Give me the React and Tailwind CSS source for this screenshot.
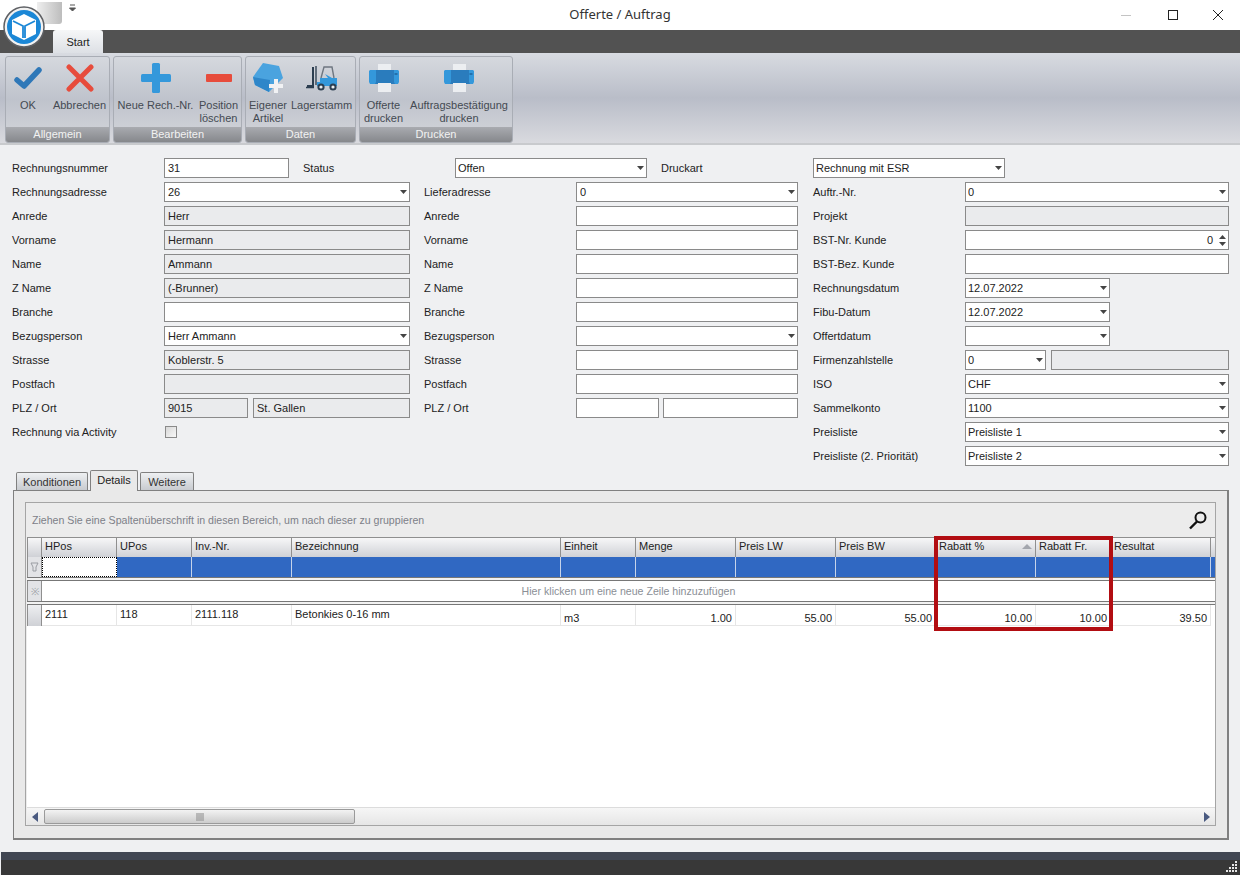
const COLS = [
  { name: 'HPos', w: 75 },
  { name: 'UPos', w: 75 },
  { name: 'Inv.-Nr.', w: 100 },
  { name: 'Bezeichnung', w: 269 },
  { name: 'Einheit', w: 75 },
  { name: 'Menge', w: 100 },
  { name: 'Preis LW', w: 100 },
  { name: 'Preis BW', w: 100 },
  { name: 'Rabatt %', w: 100, sort: true },
  { name: 'Rabatt Fr.', w: 75 },
  { name: 'Resultat', w: 100 },
];

const DATA = ['2111', '118', '2111.118', 'Betonkies 0-16 mm', 'm3', '1.00', '55.00', '55.00', '10.00', '10.00', '39.50'];

function Arrow() {
  return (
    <svg width="7" height="4" viewBox="0 0 7 4" className="shrink-0">
      <path d="M0 0H7L3.5 4Z" fill="#444" />
    </svg>
  );
}

function Field({ w = 'flex-1', value, gray, select, right, spin, tight }) {
  return (
    <div className={`${w} h-5 border border-[#8a8a8a] flex items-center ${tight ? 'pl-[2px]' : 'pl-[3px]'} pr-[1px] text-[11px] text-[#222] ${gray ? 'bg-[#eaebed]' : 'bg-white'}`}>
      <span className={`flex-1 whitespace-nowrap overflow-hidden ${right ? 'text-right pr-[6px]' : ''}`}>{value}</span>
      {select && <span className="mr-[1px] flex"><Arrow /></span>}
      {spin && (
        <span className="flex flex-col gap-[3px] mr-[1px]">
          <span className="rotate-180 flex"><Arrow /></span>
          <Arrow />
        </span>
      )}
    </div>
  );
}

function Row({ label, children }) {
  return (
    <div className="flex items-center h-5 mb-1">
      <span className="w-[152px] shrink-0 text-[#222] whitespace-nowrap">{label}</span>
      {children}
    </div>
  );
}

function CheckIcon() {
  return (
    <svg width="28" height="22" viewBox="0 0 28 22">
      <path d="M3 13L10 19L25 3" fill="none" stroke="#2f78b8" strokeWidth="5.5" strokeLinecap="round" strokeLinejoin="round" />
    </svg>
  );
}

function CrossIcon() {
  return (
    <svg width="28" height="28" viewBox="0 0 28 28">
      <path d="M3 3L25 25M25 3L3 25" fill="none" stroke="#e74c3c" strokeWidth="5" strokeLinecap="round" />
    </svg>
  );
}

function PlusIcon() {
  return (
    <svg width="30" height="30" viewBox="0 0 30 30">
      <rect x="11" y="0" width="8" height="30" rx="1.5" fill="#3498db" />
      <rect x="0" y="11" width="30" height="8" rx="1.5" fill="#3498db" />
    </svg>
  );
}

function MinusIcon() {
  return (
    <svg width="26" height="8" viewBox="0 0 26 8">
      <rect x="0" y="0" width="26" height="8" rx="1" fill="#e74c3c" />
    </svg>
  );
}

function CubePlusIcon() {
  return (
    <svg width="31" height="30" viewBox="0 0 31 30">
      <path d="M10 0L26 3L30 15L16 29L2 22L0 14Z" fill="#4aa3df" />
      <path d="M0 14L17 17L16 29L2 22Z" fill="#2e86c9" />
      <path d="M21 16h4v5h5v4h-5v5h-4v-5h-5v-4h5z" fill="#f1f2f4" />
    </svg>
  );
}

function ForkliftIcon() {
  return (
    <svg width="32" height="26" viewBox="0 0 32 26">
      <path d="M7 2V21H1" fill="none" stroke="#2c3e50" strokeWidth="2" />
      <path d="M0 22.5H8" stroke="#2c3e50" strokeWidth="1.5" />
      <path d="M10 1V20" stroke="#3d4d5c" strokeWidth="1.5" />
      <path d="M15 13L18 2H26L28 13" fill="none" stroke="#6e7680" strokeWidth="1.4" />
      <path d="M19 9L22 13H14V17H11V21H31V13H26" fill="#3498db" />
      <circle cx="15" cy="22" r="3.6" fill="#2c3e50" />
      <circle cx="15" cy="22" r="1.6" fill="#ecf0f1" />
      <circle cx="27" cy="22" r="3.6" fill="#2c3e50" />
      <circle cx="27" cy="22" r="1.6" fill="#ecf0f1" />
    </svg>
  );
}

function PrinterIcon() {
  return (
    <svg width="30" height="28" viewBox="0 0 30 28">
      <rect x="9" y="0" width="13" height="7" fill="#eceef1" />
      <path d="M1 6H29L30 7V18L29 20H1L0 18V7Z" fill="#3498db" />
      <path d="M7 6H25V18L26 20H6L7 18Z" fill="#2a7cbd" />
      <rect x="25.5" y="9" width="3" height="2" fill="#2470ac" />
      <rect x="9" y="19" width="13" height="9" fill="#eceef1" />
    </svg>
  );
}

function RibbonBtn({ w, icon, lines }) {
  return (
    <div className={`${w} shrink-0 flex flex-col items-center`}>
      <div className="h-[40px] flex items-center justify-center">{icon}</div>
      <div className="mt-[1px] text-[11px] leading-[13px] text-[#444a52] text-center whitespace-nowrap">
        {lines.map((l) => (
          <div key={l}>{l}</div>
        ))}
      </div>
    </div>
  );
}

function RibbonGroup({ w, title, children }) {
  return (
    <div className={`${w} h-[87px] shrink-0 flex flex-col rounded-[3px] border border-[#a9adb5] overflow-hidden bg-gradient-to-b from-[#d5d8de] via-[#bfc3cc] to-[#d4d6db]`}>
      <div className="flex-1 flex pt-[1px]">{children}</div>
      <div className="h-[15px] text-[11px] leading-[15px] text-center text-[#f2f2f2] bg-gradient-to-b from-[#a9abb0] to-[#86888c]">{title}</div>
    </div>
  );
}

function Tab({ label, w, active }) {
  if (active) {
    return <div className={`${w} h-[21px] text-center border border-b-0 border-[#808080] rounded-t-[2px] bg-[#e9e9e9] leading-[19px] text-[#222] -mb-[1px] relative`}>{label}</div>;
  }
  return <div className={`${w} h-[18px] text-center border border-b-0 border-[#808080] rounded-t-[2px] bg-gradient-to-b from-[#eef0f2] to-[#c8cbd0] leading-[18px] text-[#333]`}>{label}</div>;
}

function GridTable() {
  return (
    <div className="text-[#222]">
      <div className="flex h-5 border-t border-[#8f8f8f] bg-gradient-to-b from-[#f7f7f8] to-[#cfd1d6]">
        <div className="w-[15px] shrink-0 border-l border-r border-[#8f8f8f]" />
        {COLS.map((c) => (
          <div key={c.name} style={{ width: c.w }} className="relative shrink-0 border-r border-[#8f8f8f] pl-[3px] leading-[17px]">
            {c.name}
            {c.sort && (
              <svg width="10" height="5" viewBox="0 0 10 5" className="absolute right-[3px] top-[6px]">
                <path d="M0 5L5 0L10 5Z" fill="#a3a6ad" />
              </svg>
            )}
          </div>
        ))}
      </div>
      <div className="flex h-[21px] border-b border-[#777] bg-[#3068c2]">
        <div className="w-[15px] shrink-0 border-l border-r border-[#8f8f8f] flex items-center justify-center bg-[#e2e3e6]">
          <svg width="9" height="10" viewBox="0 0 9 10">
            <path d="M1 1H8L6 5V9H3V5Z" fill="none" stroke="#9a9da3" />
          </svg>
        </div>
        {COLS.map((c, i) => (
          <div key={c.name} style={{ width: c.w }} className={`shrink-0 ${i === 0 ? 'bg-white border border-dotted border-black' : 'border-r border-[#c5d3ea]'}`} />
        ))}
      </div>
      <div className="h-[2px] bg-[#f2f2f2]" />
      <div className="flex h-[22px] border-t border-b border-[#777]">
        <div className="w-[15px] shrink-0 border-l border-r border-[#8f8f8f] flex items-center justify-center bg-[#e2e3e6] text-[10px] text-[#a0a3a9]">※</div>
        <div className="flex-1 bg-white text-center text-[10.6px] leading-[21px] text-[#8b8f96]">Hier klicken um eine neue Zeile hinzuzufügen</div>
      </div>
      <div className="h-[2px] bg-[#f2f2f2]" />
      <div className="flex h-[22px] border-t border-[#777]">
        <div className="w-[15px] shrink-0 border-l border-r border-[#8f8f8f] bg-gradient-to-b from-[#eeeff1] to-[#cfd1d6]" />
        {COLS.map((c, i) => (
          <div
            key={c.name}
            style={{ width: c.w }}
            className={`shrink-0 border-r border-b border-[#e6e6e6] px-[3px] ${i > 4 ? 'text-right' : ''} ${i > 3 ? 'pt-[5px]' : 'pt-[1px]'}`}
          >
            {DATA[i]}
          </div>
        ))}
      </div>
    </div>
  );
}

export default function App() {
  return (
    <div className="relative w-[1240px] h-[875px] overflow-hidden flex flex-col bg-[#eff0f2] font-['Liberation_Sans',sans-serif] text-[11px]">
      {/* title bar */}
      <div className="h-[30px] shrink-0 bg-white flex items-center relative">
        <div className="w-[25px] h-[22px] ml-[37px] -mt-[4px] bg-gradient-to-r from-[#eeeeee] to-[#bdbdbd] rounded-br-[3px]" />
        <svg width="7" height="8" viewBox="0 0 7 8" className="ml-[7px] -mt-[14px]">
          <path d="M1 1H6M0.5 4H6.5L3.5 7Z" stroke="#555" fill="#555" strokeWidth="1" />
        </svg>
        <div className="flex-1 text-center font-['Noto_Sans',sans-serif] text-[13px] text-[#333] -ml-[76px]">Offerte / Auftrag</div>
        <div className="absolute right-0 top-0 h-[30px] flex items-center">
          <svg width="12" height="12" viewBox="0 0 12 12" className="mr-[35px]"><path d="M1 6.5H11" stroke="#c4c4c4" /></svg>
          <svg width="12" height="12" viewBox="0 0 12 12" className="mr-[33px]"><rect x="1.5" y="1.5" width="9" height="9" fill="none" stroke="#222" /></svg>
          <svg width="12" height="12" viewBox="0 0 12 12" className="mr-[16px]"><path d="M1 1L11 11M11 1L1 11" stroke="#222" /></svg>
        </div>
      </div>

      {/* app logo */}
      <svg width="42" height="42" viewBox="0 0 42 42" className="absolute left-[3px] top-[6px]">
        <circle cx="21" cy="21" r="20" fill="#f2f2f2" stroke="#5e6064" strokeWidth="1.5" />
        <circle cx="21" cy="21" r="17" fill="#1b87d6" />
        <path d="M21 8L33 14V28L21 34L9 28V14Z" fill="#ffffff" />
        <path d="M10 15L20 20V32M32 15L22 20V32" fill="none" stroke="#1b87d6" strokeWidth="1.8" />
      </svg>

      {/* tab band */}
      <div className="h-[23px] shrink-0 bg-[#525252] flex items-end pl-[53px]">
        <div className="w-[50px] h-[23px] rounded-t-[3px] bg-gradient-to-b from-[#f6f7f8] to-[#dde0e5] text-[#222] text-center leading-[24px]">Start</div>
      </div>

      {/* ribbon */}
      <div className="h-[92px] shrink-0 flex gap-[3px] pl-[5px] pt-[3px] border-b-2 border-[#c8cacd] bg-gradient-to-b from-[#d8dbe1] via-[#b9bdc8] to-[#d9dadf]">
        <RibbonGroup w="w-[105px]" title="Allgemein">
          <RibbonBtn w="w-[44px]" icon={<CheckIcon />} lines={['OK']} />
          <RibbonBtn w="w-[59px]" icon={<CrossIcon />} lines={['Abbrechen']} />
        </RibbonGroup>
        <RibbonGroup w="w-[129px]" title="Bearbeiten">
          <RibbonBtn w="w-[83px]" icon={<PlusIcon />} lines={['Neue Rech.-Nr.']} />
          <RibbonBtn w="w-[43px]" icon={<MinusIcon />} lines={['Position', 'löschen']} />
        </RibbonGroup>
        <RibbonGroup w="w-[111px]" title="Daten">
          <RibbonBtn w="w-[44px]" icon={<CubePlusIcon />} lines={['Eigener', 'Artikel']} />
          <RibbonBtn w="w-[63px]" icon={<ForkliftIcon />} lines={['Lagerstamm']} />
        </RibbonGroup>
        <RibbonGroup w="w-[154px]" title="Drucken">
          <RibbonBtn w="w-[47px]" icon={<PrinterIcon />} lines={['Offerte', 'drucken']} />
          <RibbonBtn w="w-[104px]" icon={<PrinterIcon />} lines={['Auftragsbestätigung', 'drucken']} />
        </RibbonGroup>
      </div>

      {/* form */}
      <div className="pl-3 pt-[13px] shrink-0">
        <div className="flex items-center h-5 mb-1 text-[#222]">
          <span className="w-[152px] shrink-0">Rechnungsnummer</span>
          <Field w="w-[125px]" value="31" />
          <span className="w-[152px] shrink-0 ml-[14px]">Status</span>
          <Field w="w-[192px]" value="Offen" select tight />
          <span className="w-[152px] shrink-0 ml-[14px]">Druckart</span>
          <Field w="w-[192px]" value="Rechnung mit ESR" select tight />
        </div>
        <div className="flex">
          <div className="w-[398px] shrink-0">
            <Row label="Rechnungsadresse"><Field value="26" select /></Row>
            <Row label="Anrede"><Field value="Herr" gray /></Row>
            <Row label="Vorname"><Field value="Hermann" gray /></Row>
            <Row label="Name"><Field value="Ammann" gray /></Row>
            <Row label="Z Name"><Field value="(-Brunner)" gray /></Row>
            <Row label="Branche"><Field /></Row>
            <Row label="Bezugsperson"><Field value="Herr Ammann" select /></Row>
            <Row label="Strasse"><Field value="Koblerstr. 5" gray /></Row>
            <Row label="Postfach"><Field gray /></Row>
            <Row label="PLZ / Ort">
              <div className="flex-1 flex gap-[5px]">
                <Field w="w-[84px]" value="9015" gray />
                <Field value="St. Gallen" gray />
              </div>
            </Row>
            <Row label="Rechnung via Activity">
              <span className="ml-[1px] w-[12px] h-[12px] border border-[#8a8a8a] bg-gradient-to-br from-[#d8d8d8] to-[#f8f8f8]" />
            </Row>
          </div>

          <div className="w-[374px] shrink-0 ml-[14px]">
            <Row label="Lieferadresse"><Field value="0" select /></Row>
            <Row label="Anrede"><Field /></Row>
            <Row label="Vorname"><Field /></Row>
            <Row label="Name"><Field /></Row>
            <Row label="Z Name"><Field /></Row>
            <Row label="Branche"><Field /></Row>
            <Row label="Bezugsperson"><Field select /></Row>
            <Row label="Strasse"><Field /></Row>
            <Row label="Postfach"><Field /></Row>
            <Row label="PLZ / Ort">
              <div className="flex-1 flex gap-[4px]">
                <Field w="w-[83px]" />
                <Field />
              </div>
            </Row>
          </div>

          <div className="w-[416px] shrink-0 ml-[15px]">
            <Row label="Auftr.-Nr."><Field value="0" select tight /></Row>
            <Row label="Projekt"><Field gray /></Row>
            <Row label="BST-Nr. Kunde"><Field value="0" right spin /></Row>
            <Row label="BST-Bez. Kunde"><Field /></Row>
            <Row label="Rechnungsdatum"><Field w="w-[145px]" value="12.07.2022" select tight /></Row>
            <Row label="Fibu-Datum"><Field w="w-[145px]" value="12.07.2022" select tight /></Row>
            <Row label="Offertdatum"><Field w="w-[145px]" select /></Row>
            <Row label="Firmenzahlstelle">
              <div className="flex-1 flex gap-[5px]">
                <Field w="w-[81px]" value="0" select tight />
                <Field gray />
              </div>
            </Row>
            <Row label="ISO"><Field value="CHF" select tight /></Row>
            <Row label="Sammelkonto"><Field value="1100" select tight /></Row>
            <Row label="Preisliste"><Field value="Preisliste 1" select tight /></Row>
            <Row label="Preisliste (2. Priorität)"><Field value="Preisliste 2" select tight /></Row>
          </div>
        </div>
      </div>

      {/* tabs */}
      <div className="flex items-end gap-[2px] pl-[16px] h-[20px] shrink-0 relative z-10">
        <Tab label="Konditionen" w="w-[72px]" />
        <Tab label="Details" w="w-[48px]" active />
        <Tab label="Weitere" w="w-[54px]" />
      </div>
      <div className="ml-[13px] w-[1216px] h-[350px] shrink-0 border border-[#808080] border-b-2 border-r-2 bg-[#e9e9e9] px-[11px] pt-[11px] pb-[12px]">
        <div className="h-full border border-[#a5a5a5] bg-[#ececec] flex flex-col pl-[1px]">
          <div className="h-[34px] shrink-0 flex items-center justify-between pl-[5px] pr-[7px] text-[10.6px] text-[#7d8088]">
            <span className="pt-[2px]">Ziehen Sie eine Spaltenüberschrift in diesen Bereich, um nach dieser zu gruppieren</span>
            <svg width="20" height="20" viewBox="0 0 20 20">
              <circle cx="12.5" cy="7.5" r="5" fill="none" stroke="#111" strokeWidth="2" />
              <path d="M9 11.5L2 18.5" stroke="#111" strokeWidth="2.4" />
            </svg>
          </div>
          <div className="flex-1 bg-white">
            <GridTable />
          </div>
          <div className="h-[18px] shrink-0 flex items-center border-t border-[#dcdcdc] bg-gradient-to-b from-[#f6f6f6] to-[#e6e6e6]">
            <svg width="6" height="10" viewBox="0 0 6 10" className="ml-[5px] shrink-0"><path d="M6 0V10L0 5Z" fill="#4a5a80" /></svg>
            <div className="ml-[6px] w-[311px] h-[15px] shrink-0 border border-[#9a9a9a] rounded-[2px] bg-gradient-to-b from-[#f3f3f3] to-[#cccccc] flex items-center justify-center">
              <svg width="8" height="8" viewBox="0 0 8 8"><path d="M1 0V8M3 0V8M5 0V8M7 0V8" stroke="#8a8a8a" /></svg>
            </div>
            <svg width="6" height="10" viewBox="0 0 6 10" className="ml-auto mr-[5px] shrink-0"><path d="M0 0V10L6 5Z" fill="#4a5a80" /></svg>
          </div>
        </div>
      </div>

      {/* status bar */}
      <div className="mt-[12px] h-[23px] shrink-0 ml-[1px] flex flex-col">
        <div className="h-[8px] bg-[#414652]" />
        <div className="flex-1 bg-[#383838] flex items-end justify-end pr-[2px] pb-[2px]">
          <svg width="12" height="12" viewBox="0 0 12 12">
            <path d="M9 0h2v2H9zM6 3h2v2H6zM9 3h2v2H9zM3 6h2v2H3zM6 6h2v2H6zM9 6h2v2H9zM0 9h2v2H0zM3 9h2v2H3zM6 9h2v2H6zM9 9h2v2H9z" fill="#e8e8e8" />
          </svg>
        </div>
      </div>

      {/* highlight around the discount columns */}
      <div className="absolute left-[934px] top-[536px] w-[179px] h-[95px] border-4 border-[#b20d12]" />
    </div>
  );
}
